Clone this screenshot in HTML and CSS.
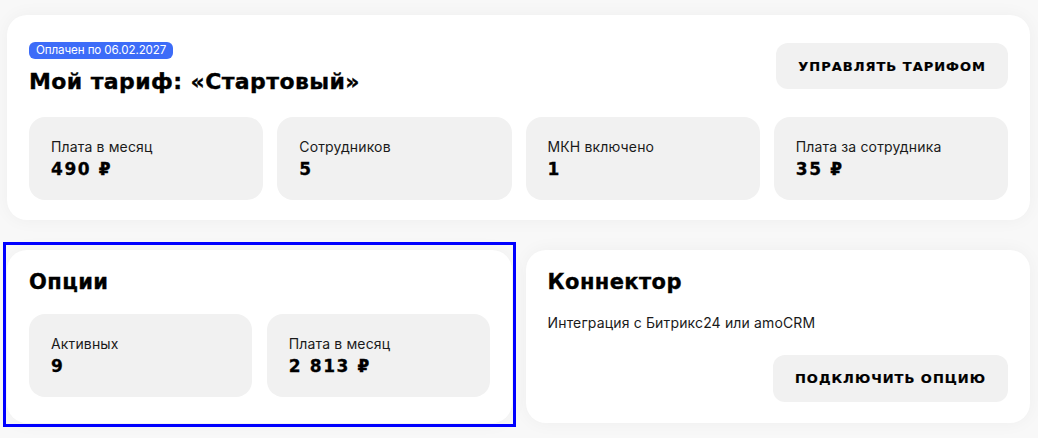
FILE: index.html
```html
<!DOCTYPE html>
<html lang="ru">
<head>
<meta charset="utf-8">
<title>Мой тариф</title>
<link rel="stylesheet" href="styles.css">
</head>
<body>
<div class="page">
  <section class="card tariff">
    <div class="tariff-head">
      <div class="tariff-title">
        <span class="badge">Оплачен по 06.02.2027</span>
        <h1 class="h1">Мой тариф: «Стартовый»</h1>
      </div>
      <button class="btn">Управлять тарифом</button>
    </div>
    <div class="stats stats-4">
      <div class="stat"><div class="stat-label">Плата в месяц</div><div class="stat-value">490 ₽</div></div>
      <div class="stat"><div class="stat-label">Сотрудников</div><div class="stat-value">5</div></div>
      <div class="stat"><div class="stat-label">МКН включено</div><div class="stat-value">1</div></div>
      <div class="stat"><div class="stat-label">Плата за сотрудника</div><div class="stat-value">35 ₽</div></div>
    </div>
  </section>
  <div class="row">
    <section class="card option selected">
      <h2 class="h2">Опции</h2>
      <div class="stats stats-2">
        <div class="stat"><div class="stat-label">Активных</div><div class="stat-value">9</div></div>
        <div class="stat"><div class="stat-label">Плата в месяц</div><div class="stat-value">2 813 ₽</div></div>
      </div>
    </section>
    <section class="card connector">
      <h2 class="h2">Коннектор</h2>
      <p class="desc">Интеграция с Битрикс24 или amoCRM</p>
      <div class="actions"><button class="btn">Подключить опцию</button></div>
    </section>
  </div>
</div>
</body>
</html>
```
FILE: styles.css
```css
* { box-sizing: border-box; }
html, body { margin: 0; padding: 0; }
body {
  background: #f8f8f8;
  font-family: "Inter", "Noto Sans", sans-serif;
  color: #111;
  width: 1038px;
  height: 438px;
  overflow: hidden;
}
.page {
  padding: 15px 8px 0 7px;
  display: flex;
  flex-direction: column;
  gap: 30px;
}
.card {
  background: #fff;
  border-radius: 20px;
  box-shadow: 0 0 18px rgba(0, 0, 0, 0.045);
}
.tariff {
  height: 205px;
  padding: 27px 22px 20px 22px;
  display: flex;
  flex-direction: column;
}
.tariff-head {
  display: flex;
  justify-content: space-between;
  align-items: flex-start;
}
.tariff-title {
  display: flex;
  flex-direction: column;
  align-items: flex-start;
}
.badge {
  background: #3d6cf8;
  color: #fff;
  font-size: 11.6px;
  line-height: 17px;
  height: 17px;
  padding: 0 7px;
  border-radius: 6px;
  letter-spacing: -0.1px;
}
.h1, .h2 {
  font-family: "DejaVu Sans", sans-serif;
  font-weight: 700;
  margin: 0;
  color: #000;
  -webkit-text-stroke: 0.35px #000;
}
.h1 {
  font-size: 22px;
  line-height: 28px;
  margin-top: 9px;
  letter-spacing: 0.4px;
}
.h2 {
  font-size: 21px;
  line-height: 24px;
  letter-spacing: 0.4px;
}
.btn {
  border: 0;
  background: #f1f1f1;
  border-radius: 12px;
  font-family: "DejaVu Sans", sans-serif;
  font-weight: 700;
  font-size: 13px;
  text-transform: uppercase;
  color: #000;
  height: 46px;
  padding: 0 22px;
  margin-top: 1px;
  letter-spacing: 1px;
  -webkit-text-stroke: 0.2px #000;
}
.stats {
  display: grid;
  gap: 14px;
  margin-top: auto;
}
.stats-4 { grid-template-columns: repeat(4, 1fr); }
.stats-2 { grid-template-columns: repeat(2, 1fr); gap: 15px; margin-top: 20px; }
.stat {
  background: #f1f1f1;
  border-radius: 16px;
  height: 83px;
  padding: 21px 22px 0 22px;
}
.stat-label {
  font-size: 14px;
  line-height: 18px;
  color: #1a1a1a;
  letter-spacing: 0.15px;
}
.stat-value {
  font-family: "DejaVu Sans", sans-serif;
  font-weight: 700;
  font-size: 17px;
  line-height: 22px;
  margin-top: 2px;
  color: #000;
  letter-spacing: 1.6px;
  -webkit-text-stroke: 0.3px #000;
}
.row {
  display: flex;
  gap: 14px;
}
.option, .connector {
  flex: 1;
  height: 173px;
  padding: 20px 22px 0 22px;
}
.option { position: relative; }
.option.selected::after {
  content: "";
  position: absolute;
  top: -8px;
  left: -4px;
  right: -4px;
  bottom: -4px;
  border: 3px solid #0000ff;
  pointer-events: none;
}
.connector {
  display: flex;
  flex-direction: column;
  padding-bottom: 21px;
}
.desc {
  margin: 20px 0 0 0;
  font-size: 14px;
  line-height: 18px;
  color: #1a1a1a;
  letter-spacing: 0.15px;
}
.actions {
  margin-top: auto;
  display: flex;
  justify-content: flex-end;
}
.actions .btn { height: 47px; }
```
